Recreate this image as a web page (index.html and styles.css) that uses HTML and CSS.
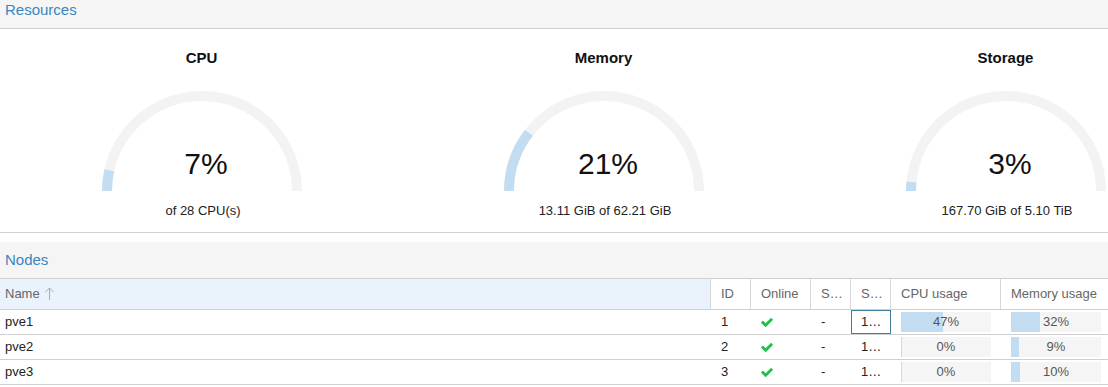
FILE: index.html
```html
<!DOCTYPE html>
<html lang="en">
<head>
    <meta charset="UTF-8">
    <meta name="viewport" content="width=device-width, initial-scale=1.0">
    <title>Datacenter Summary</title>
    <link rel="stylesheet" href="styles.css">
</head>
<body>
    <div class="page">
        <div class="panel-header">Resources</div>

        <div class="gauges">
            <div class="gauge">
                <div class="gauge__title">CPU</div>
                <svg class="gauge__arc" width="200" height="100" viewBox="0 0 200 100">
                    <path class="gauge__track" d="M5 100 A95 95 0 0 1 195 100"/>
                    <path class="gauge__fill" d="M5 100 A95 95 0 0 1 7.29 79.28"/>
                    <text class="gauge__value" x="104" y="83">7%</text>
                </svg>
                <div class="gauge__text">of 28 CPU(s)</div>
            </div>
            <div class="gauge">
                <div class="gauge__title">Memory</div>
                <svg class="gauge__arc" width="200" height="100" viewBox="0 0 200 100">
                    <path class="gauge__track" d="M5 100 A95 95 0 0 1 195 100"/>
                    <path class="gauge__fill" d="M5 100 A95 95 0 0 1 24.93 41.77"/>
                    <text class="gauge__value" x="104" y="83">21%</text>
                </svg>
                <div class="gauge__text">13.11 GiB of 62.21 GiB</div>
            </div>
            <div class="gauge">
                <div class="gauge__title">Storage</div>
                <svg class="gauge__arc" width="200" height="100" viewBox="0 0 200 100">
                    <path class="gauge__track" d="M5 100 A95 95 0 0 1 195 100"/>
                    <path class="gauge__fill" d="M5 100 A95 95 0 0 1 5.42 91.06"/>
                    <text class="gauge__value" x="104" y="83">3%</text>
                </svg>
                <div class="gauge__text">167.70 GiB of 5.10 TiB</div>
            </div>
        </div>

        <div class="panel-header panel-header--nodes">Nodes</div>

        <div class="grid">
            <div class="grid__row grid__row--head">
                <div class="grid__cell grid__cell--name grid__cell--sorted">Name
                    <svg class="sort-icon" width="9" height="13" viewBox="0 0 9 13"><path d="M4.5 13V1M0.5 5L4.5 1L8.5 5"/></svg>
                </div>
                <div class="grid__cell">ID</div>
                <div class="grid__cell">Online</div>
                <div class="grid__cell">Support</div>
                <div class="grid__cell">Server Address</div>
                <div class="grid__cell">CPU usage</div>
                <div class="grid__cell">Memory usage</div>
            </div>

            <div class="grid__row">
                <div class="grid__cell grid__cell--name">pve1</div>
                <div class="grid__cell">1</div>
                <div class="grid__cell"><svg class="check" width="12" height="9" viewBox="121 334 1550 1188"><path d="M1671 566q0 40-28 68l-724 724-136 136q-28 28-68 28t-68-28l-136-136-362-362q-28-28-28-68t28-68l136-136q28-28 68-28t68 28l294 295 656-657q28-28 68-28t68 28l136 136q28 28 28 68z"/></svg></div>
                <div class="grid__cell">-</div>
                <div class="grid__cell grid__cell--focus">192.168.10.11</div>
                <div class="grid__cell grid__cell--bar"><div class="bar" style="--p: 47%">47%</div></div>
                <div class="grid__cell grid__cell--bar"><div class="bar" style="--p: 32%">32%</div></div>
            </div>

            <div class="grid__row">
                <div class="grid__cell grid__cell--name">pve2</div>
                <div class="grid__cell">2</div>
                <div class="grid__cell"><svg class="check" width="12" height="9" viewBox="121 334 1550 1188"><path d="M1671 566q0 40-28 68l-724 724-136 136q-28 28-68 28t-68-28l-136-136-362-362q-28-28-28-68t28-68l136-136q28-28 68-28t68 28l294 295 656-657q28-28 68-28t68 28l136 136q28 28 28 68z"/></svg></div>
                <div class="grid__cell">-</div>
                <div class="grid__cell">192.168.10.12</div>
                <div class="grid__cell grid__cell--bar"><div class="bar" style="--p: 0%">0%</div></div>
                <div class="grid__cell grid__cell--bar"><div class="bar" style="--p: 9%">9%</div></div>
            </div>

            <div class="grid__row">
                <div class="grid__cell grid__cell--name">pve3</div>
                <div class="grid__cell">3</div>
                <div class="grid__cell"><svg class="check" width="12" height="9" viewBox="121 334 1550 1188"><path d="M1671 566q0 40-28 68l-724 724-136 136q-28 28-68 28t-68-28l-136-136-362-362q-28-28-28-68t28-68l136-136q28-28 68-28t68 28l294 295 656-657q28-28 68-28t68 28l136 136q28 28 28 68z"/></svg></div>
                <div class="grid__cell">-</div>
                <div class="grid__cell">192.168.10.13</div>
                <div class="grid__cell grid__cell--bar"><div class="bar" style="--p: 0%">0%</div></div>
                <div class="grid__cell grid__cell--bar"><div class="bar" style="--p: 10%">10%</div></div>
            </div>
        </div>
    </div>
</body>
</html>
```

FILE: styles.css
```css
* { box-sizing: border-box; }

body {
  margin: 0;
  font-family: "Liberation Sans", Arial, sans-serif;
  color: #222;
  background: #fff;
}

.page {
  width: 1108px;
  overflow: hidden;
}

/* ---------- panel headers ---------- */

.panel-header {
  height: 29px;
  padding: 1px 0 0 5px;
  font-size: 15px;
  line-height: 18px;
  color: #3a86c2;
  background: #f5f5f5;
  border-bottom: 1px solid #d0d0d0;
}

.panel-header--nodes {
  margin-top: 9px;
  height: 37px;
  padding-top: 0;
  line-height: 36px;
}

/* ---------- gauges ---------- */

.gauges {
  display: grid;
  grid-template-columns: repeat(3, 402px);
  width: 1206px;
  border-bottom: 1px solid #d0d0d0;
}

.gauge {
  display: flex;
  flex-direction: column;
  align-items: center;
  padding: 20px 0 13px 1px;
}

.gauge__title {
  font-size: 15px;
  font-weight: bold;
  line-height: 18px;
  color: #111;
}

.gauge__arc {
  display: block;
  margin-top: 24px;
}

.gauge__track,
.gauge__fill {
  fill: none;
  stroke-width: 10;
}

.gauge__track { stroke: #f3f3f3; }
.gauge__fill  { stroke: #c2ddf2; }

.gauge__value {
  font-family: "Liberation Sans", Arial, sans-serif;
  font-size: 30px;
  fill: #111;
  text-anchor: middle;
}

.gauge__text {
  margin-top: 12px;
  padding-left: 3px;
  font-size: 13px;
  line-height: 16px;
  color: #222;
}

/* ---------- nodes grid ---------- */

.grid__row {
  display: grid;
  grid-template-columns: 711px 40px 60px 40px 40px 110px 110px;
  height: 25px;
  border-bottom: 1px solid #d0d0d0;
  font-size: 13px;
}

.grid__row--head {
  height: 31px;
  color: #666;
}

.grid__cell {
  padding: 0 5px 0 10px;
  line-height: 24px;
  white-space: nowrap;
  overflow: hidden;
  text-overflow: ellipsis;
}

.grid__row--head .grid__cell {
  line-height: 30px;
  border-right: 1px solid #d8d8d8;
}

.grid__cell--name { padding-left: 5px; }

.grid__cell--sorted { background: #eaf3fb; }

.grid__cell--focus { box-shadow: inset 0 0 0 1px #3f7f9d; }

.sort-icon {
  margin-left: 2px;
  vertical-align: -2px;
}

.sort-icon path {
  fill: none;
  stroke: #aaa;
  stroke-width: 1;
}

.check {
  vertical-align: -1px;
  fill: #21bf4b;
}

.grid__cell--bar { padding: 0 10px; }

.bar {
  height: 20px;
  margin-top: 2px;
  line-height: 20px;
  text-align: center;
  color: #555;
  background: linear-gradient(to right, #c2ddf2 max(var(--p), 1px), #f5f5f5 0);
}
```
